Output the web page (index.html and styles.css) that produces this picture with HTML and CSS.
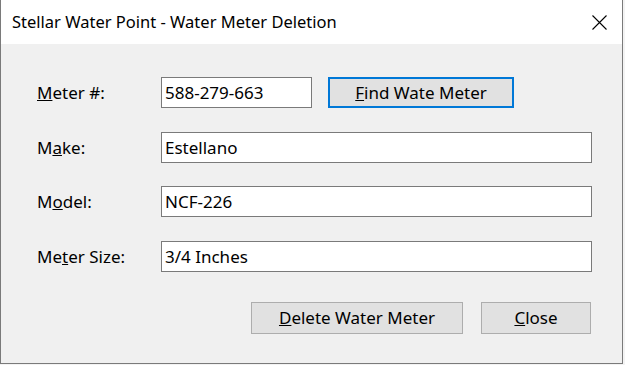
FILE: index.html
```html
<!DOCTYPE html>
<html lang="en">
<head>
    <meta charset="UTF-8">
    <title>Stellar Water Point - Water Meter Deletion</title>
    <link rel="stylesheet" href="styles.css">
</head>
<body>
    <div class="window">
        <div class="titlebar">
            <span class="title">Stellar Water Point - Water Meter Deletion</span>
            <svg class="close-x" width="15" height="15" viewBox="0 0 15 15">
                <path d="M0.5 0.5 L14.5 14.5 M14.5 0.5 L0.5 14.5" stroke="#000" stroke-width="1.1" fill="none"/>
            </svg>
        </div>
        <div class="client">
            <div class="form">
                <label class="label"><u>M</u>eter #:</label>
                <div class="first-row">
                    <div class="textbox short">588-279-663</div>
                    <button class="button default"><u>F</u>ind Wate Meter</button>
                </div>

                <label class="label">M<u>a</u>ke:</label>
                <div class="textbox">Estellano</div>

                <label class="label">M<u>o</u>del:</label>
                <div class="textbox">NCF-226</div>

                <label class="label">Me<u>t</u>er Size:</label>
                <div class="textbox">3/4 Inches</div>
            </div>
            <div class="actions">
                <button class="button delete"><u>D</u>elete Water Meter</button>
                <button class="button close"><u>C</u>lose</button>
            </div>
        </div>
    </div>
</body>
</html>
```

FILE: styles.css
```css
body {
    margin: 0;
    background-color: #f3f3f3;
    font-family: "Noto Sans", "Open Sans", Arial, sans-serif;
    color: #000;
}
.window {
    width: 621px;
    height: 363px;
    border: 1px solid #7a7a7a;
    border-top: none;
    background-color: #f0f0f0;
    display: flex;
    flex-direction: column;
}
.titlebar {
    height: 44px;
    background-color: white;
    display: flex;
    align-items: center;
    justify-content: space-between;
    padding: 0 15px 0 11px;
}
.title {
    font-size: 16.5px;
    margin-top: -1px;
}
.close-x {
    display: block;
}
.client {
    padding: 33px 30px 0 36px;
}
.form {
    display: grid;
    grid-template-columns: 124px 431px;
    grid-auto-rows: 31px;
    row-gap: 23.5px;
    align-items: center;
}
.label {
    font-size: 17px;
}
.first-row {
    display: flex;
    gap: 16px;
    height: 31px;
}
.textbox {
    height: 29px;
    border: 1px solid #7a7a7a;
    background-color: white;
    font-size: 17px;
    line-height: 29px;
    padding-left: 3px;
}
.textbox.short {
    width: 146px;
}
.button {
    font-family: inherit;
    font-size: 17px;
    color: #000;
    background-color: #e1e1e1;
    border: 1px solid #adadad;
    padding: 0;
    margin: 0;
}
.button.default {
    width: 186px;
    height: 31px;
    border: 2px solid #0078d7;
}
.actions {
    display: flex;
    justify-content: flex-end;
    gap: 18px;
    margin-top: 30px;
    padding-right: 1px;
}
.delete {
    width: 212px;
    height: 32px;
}
.close {
    width: 110px;
    height: 32px;
}
```
